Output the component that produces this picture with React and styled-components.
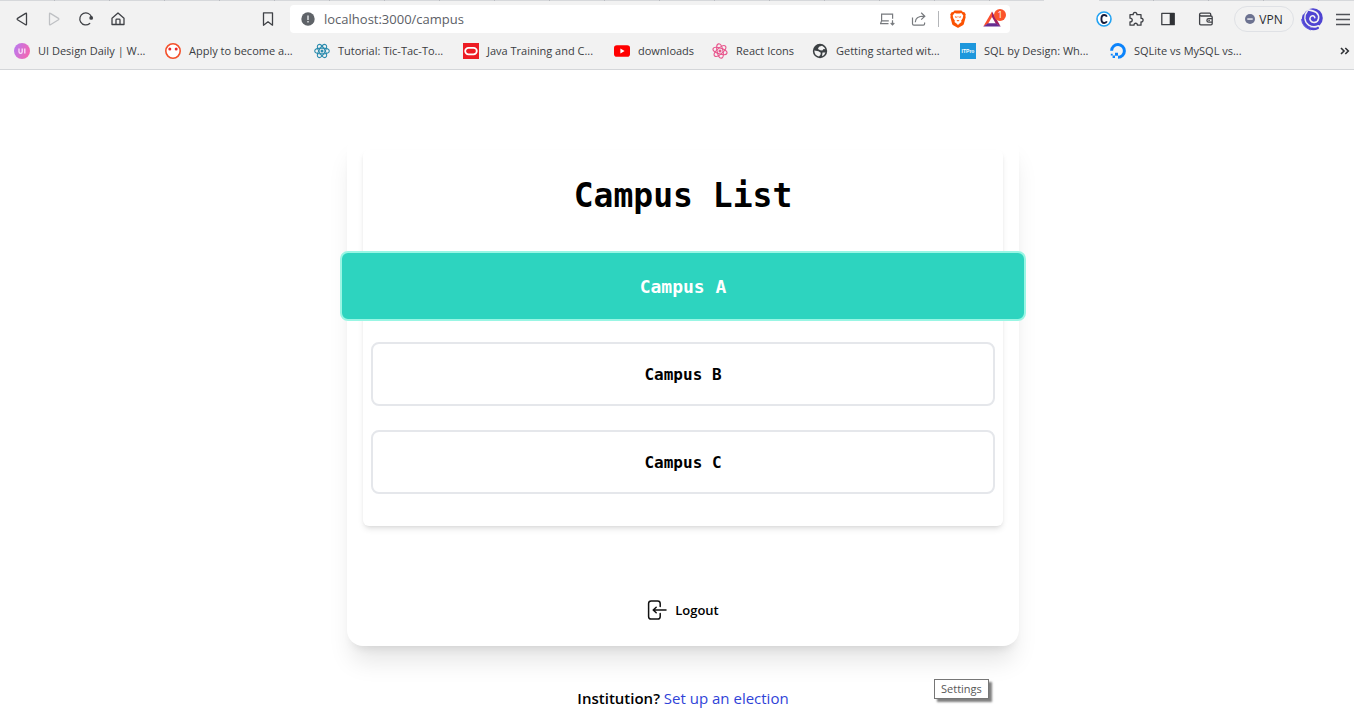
import React from "react";
import styled, { createGlobalStyle } from "styled-components";

const UI_FONT = '"Open Sans", "Noto Sans", sans-serif';
const MONO_FONT = '"DejaVu Sans Mono", "Liberation Mono", monospace';

const GlobalStyle = createGlobalStyle`
  *, *::before, *::after { box-sizing: border-box; }
  body {
    margin: 0;
    background: #fff;
    color: #000;
    font-family: ${UI_FONT};
    overflow: hidden;
  }
  button { font: inherit; color: inherit; background: none; border: 0; padding: 0; cursor: pointer; }
  a { text-decoration: none; }
  svg { display: block; flex: none; }
`;

/* ---------- browser chrome ---------- */

const Chrome = styled.header`
  background: #f2f2f2;
  border-bottom: 1px solid #d4d6d9;
`;

const TabEdge = styled.div`
  display: flex;
  gap: 55px;
  height: 1px;
`;

const EdgeLine = styled.div`
  flex: ${(p) => p.$grow};
  background: repeating-linear-gradient(90deg, #d6d8db 0 54px, #b9bbc0 54px 55px);
`;

const Toolbar = styled.div`
  display: flex;
  align-items: center;
  height: 36px;
  padding: 0 0 0 10px;
`;

const NavGroup = styled.nav`
  display: flex;
  gap: 8px;
  margin-right: 126px;
`;

const IconButton = styled.button`
  display: flex;
  align-items: center;
  justify-content: center;
  width: ${(p) => p.$width || 24}px;
  height: 28px;
  flex: none;
`;

const AddressBar = styled.div`
  display: flex;
  align-items: center;
  flex: 1;
  min-width: 0;
  height: 28px;
  margin: 0 82px 0 10px;
  padding: 0 6px 0 11px;
  border-radius: 4px;
  background: #fff;
`;

const AddressInput = styled.input`
  flex: 1;
  min-width: 0;
  height: 28px;
  margin-left: 9px;
  padding: 0;
  border: 0;
  outline: 0;
  background: transparent;
  color: #5c6066;
  font: 13px/28px ${UI_FONT};
`;

const AddressActions = styled.div`
  display: flex;
  align-items: center;
  gap: 8px;
`;

const Divider = styled.span`
  width: 1px;
  height: 16px;
  margin: 0 -1px;
  background: #b4b6b9;
`;

const RewardsButton = styled(IconButton)`
  position: relative;
  margin-left: 2px;
`;

const Badge = styled.span`
  position: absolute;
  top: 4px;
  right: -2px;
  width: 12px;
  height: 12px;
  border-radius: 50%;
  background: #fb542b;
  color: #fff;
  font-size: 9px;
  line-height: 12px;
  text-align: center;
`;

const Extensions = styled.div`
  display: flex;
  align-items: center;
  gap: 8px;
`;

const VpnButton = styled.button`
  display: flex;
  align-items: center;
  justify-content: center;
  gap: 4px;
  width: 60px;
  height: 26px;
  margin: 0 -2px 0 2px;
  border: 1px solid #dfe1e5;
  border-radius: 13px;
  color: #2b2d31;
  font-size: 12px;
`;

const Bookmarks = styled.nav`
  display: flex;
  align-items: center;
  height: 32px;
  padding: 0 4px 4px 14px;
`;

const Bookmark = styled.a`
  display: flex;
  align-items: center;
  gap: 8px;
  width: ${(p) => p.$width}px;
  flex: none;
  color: #3b3d42;
  font-size: 11px;
  line-height: 20px;
  white-space: nowrap;
`;

const MoreButton = styled.button`
  margin-left: auto;
`;

/* ---------- page ---------- */

const Page = styled.main`
  display: flex;
  flex-direction: column;
  align-items: center;
  padding: 64px 0 0 12px;
`;

const Card = styled.section`
  display: flex;
  flex-direction: column;
  align-items: center;
  width: 100%;
  max-width: 672px;
  padding: 16px 16px 24px;
  border-radius: 16px;
  background: #fff;
  box-shadow: 0 20px 25px -5px rgba(0, 0, 0, 0.1), 0 8px 10px -6px rgba(0, 0, 0, 0.1);
`;

const Panel = styled.div`
  width: 100%;
  padding: 26px 8px 32px;
  border-radius: 6px;
  box-shadow: 0 4px 6px -1px rgba(0, 0, 0, 0.1), 0 2px 4px -2px rgba(0, 0, 0, 0.1);
`;

const Title = styled.h1`
  margin: 0 0 38px;
  font: 700 33px/40px ${MONO_FONT};
  text-align: center;
`;

const CampusList = styled.div`
  display: flex;
  flex-direction: column;
  gap: 24px;
`;

const CampusButton = styled.button`
  height: ${(p) => (p.$active ? 70 : 64)}px;
  margin: ${(p) => (p.$active ? "-3px -31px" : "0")};
  padding-top: 2px;
  border: 2px solid ${(p) => (p.$active ? "#99f6e4" : "#e5e7eb")};
  border-radius: 8px;
  background: ${(p) => (p.$active ? "#2dd4bf" : "#fff")};
  color: ${(p) => (p.$active ? "#fff" : "#000")};
  font: 700 ${(p) => (p.$active ? 18 : 16)}px/28px ${MONO_FONT};
`;

const LogoutButton = styled.button`
  display: flex;
  align-items: center;
  gap: 8px;
  margin-top: 72px;
  font-size: 13px;
  font-weight: 600;
  line-height: 24px;
`;

const Footer = styled.p`
  margin: 40px 0 0;
  font-size: 15px;
  line-height: 24px;
  font-weight: 600;
`;

const FooterLink = styled.a`
  color: #2f43d8;
  font-weight: 400;
`;

const Tooltip = styled.div`
  position: absolute;
  left: 934px;
  top: 679px;
  padding: 0 6px;
  border: 1px solid #767676;
  background: #fff;
  box-shadow: 3px 3px 2px rgba(0, 0, 0, 0.5);
  color: #575757;
  font-size: 11px;
  line-height: 18px;
`;

/* ---------- icons ---------- */

const Svg = ({ w = 16, h = w, children, ...rest }) => (
  <svg width={w} height={h} viewBox={`0 0 ${w} ${h}`} fill="none" aria-hidden="true" {...rest}>
    {children}
  </svg>
);

const stroke = { stroke: "#3f4146", strokeWidth: 1.3, strokeLinejoin: "round", strokeLinecap: "round" };

const Triangle = ({ flip, color }) => (
  <Svg>
    <path
      d={flip ? "M3.5 2.7v10.6q0 1 .9.4l8.1-5q.8-.7 0-1.3l-8.1-5q-.9-.6-.9.3z" : "M12.5 2.7v10.6q0 1-.9.4l-8.1-5q-.8-.7 0-1.3l8.1-5q.9-.6.9.3z"}
      {...stroke}
      stroke={color || "#3f4146"}
    />
  </Svg>
);

const Reload = () => (
  <Svg>
    <path d="M11.7 12.5A6 6 0 1 1 13.6 6.3" {...stroke} />
    <circle cx="13.2" cy="6.9" r="1.9" fill="#3f4146" />
  </Svg>
);

const Home = () => (
  <Svg>
    <path d="M2 7.2 8 2l6 5.2v6.3H2zM6 13.3V9q0-.8.8-.8h2.4q.8 0 .8.8v4.3" {...stroke} />
  </Svg>
);

const BookmarkIcon = () => (
  <Svg>
    <path d="M3.5 1.8h9v12.4L8 10.8l-4.5 3.4z" {...stroke} />
  </Svg>
);

const Info = () => (
  <Svg w={14}>
    <circle cx="7" cy="7" r="6.7" fill="#5f6368" />
    <path d="M6.2 3.4h1.6V8H6.2zM6.2 9h1.6v1.6H6.2z" fill="#d5d7da" />
  </Svg>
);

const Install = () => (
  <Svg>
    <path d="M2.600 9.700V3.200h11v4.600M1 12.600h8.500M1.600 12.500l1-2.600h7.200M13.500 9.300v4.300M11.700 12l1.800 1.800 1.800-1.800" stroke="#777a7e" strokeWidth="1.200" />
  </Svg>
);

const Share = () => (
  <Svg>
    <path d="M1.5 6.5v6.3q0 1.3 1.3 1.3h9.5q1.3 0 1.3-1.3v-1.3M4.3 11.2c.1-4 2.3-6 8.7-6M10.2 1.8l3.6 3.4-3.6 3.4" stroke="#777a7e" strokeWidth="1.2" />
  </Svg>
);

const Brave = () => (
  <Svg w={16} h={18}>
    <path d="M4.6.4h6.8l1.5 1.7 1.6.2 1.3 2.2-.5 1.5.4 1-1.8 6.7q-.3 1-1.1 1.6L8.8 17.6q-.8.5-1.6 0l-4-2.3q-.8-.6-1.1-1.6L.3 7l.4-1L.2 4.5l1.3-2.2 1.6-.2z" fill="#fb5202" />
    <path d="m4.7 3 1.8.5h3l1.8-.5 2 2.5-.6 2.7-1.6 2.6.4 1.2-2 1.4L8 15l-1.5-1.6-2-1.4.4-1.2-1.6-2.6-.6-2.7z" fill="#fff" />
    <path d="m4.800 6.200 2 .5-.4 1.300-1-.4zM11.200 6.200l-2 .5.400 1.300 1-.4zM7.600 6h.8L8 8.600zM6.400 10.500 8 10l1.600.5L8 11.600z" fill="#fb5202" />
  </Svg>
);

const Rewards = () => (
  <Svg w={18} h={16}>
    <path d="M9 .5.3 15.5l4.8-2.8L9 6z" fill="#fb4f2d" />
    <path d="m9 .5 8.7 15-4.8-2.8L9 6z" fill="#9e1f63" />
    <path d="M.3 15.5h17.4l-4.8-3.3H5.1z" fill="#662d91" />
  </Svg>
);

const CircleC = () => (
  <Svg>
    <circle cx="8" cy="8" r="7" fill="#fff" stroke="#22a2f2" strokeWidth="1.6" />
    <path d="M10.9 5.6Q10 4 8.2 4C6.3 4 5.4 5.7 5.4 8s.9 4 2.8 4q1.8 0 2.7-1.6" stroke="#151b3b" strokeWidth="1.9" />
  </Svg>
);

const Puzzle = () => (
  <Svg>
    <path d="M2 3.7h3.2c-.4-3 4-3 3.7 0H13v3.6c2.8-.4 2.8 4 0 3.7v3.2H9.4c.2-2.6-3.6-2.6-3.4 0H2V11c3-.1 3-4 0-3.8z" {...stroke} />
  </Svg>
);

const Sidebar = () => (
  <Svg>
    <path d="M1.8 2.3h12.4v11.4H1.8z" {...stroke} />
    <path d="M9.7 2h4.7v12H9.7z" fill="#303236" />
  </Svg>
);

const Wallet = () => (
  <Svg>
    <path d="M12.7 5V3.2q0-1-1-1H3q-1.4 0-1.4 1.4T3 5h10q1.2 0 1.2 1.2v6.4q0 1.2-1.2 1.2H2.8q-1.2 0-1.2-1.2V3.6M14 7.6h-3.3q-1.8 0-1.8 1.8t1.8 1.8H14" {...stroke} />
    <circle cx="11.1" cy="9.4" r=".8" fill="#3f4146" />
  </Svg>
);

const VpnDot = () => (
  <Svg w={10}>
    <circle cx="5" cy="5" r="5" fill="#6c7290" />
    <path d="M2.3 4.4h5.4v1.3H2.3z" fill="#fff" />
  </Svg>
);

const Swirl = () => (
  <Svg w={24}>
    <circle cx="13" cy="11" r="9.800" fill="#4f44d2" />
    <path d="M3.600 8.500C1.800 13.500 4 19 9.500 21.300c3 1.200 6 .9 8.400-.3" stroke="#4f44d2" strokeWidth="2.200" strokeLinecap="round" />
    <path d="M1.600 12.500C2.300 17.500 5.500 21 10.300 22.800" stroke="#635ae0" strokeWidth="1.200" strokeLinecap="round" />
    <path d="M7.300 4.200C3.500 8.500 4.200 15 8.700 18.100c3 2 6.800 2 9.800.5" stroke="#f2f2f2" strokeWidth="1.300" strokeLinecap="round" />
    <path d="M4.500 2.500c5.500.6 9.300.8 12 3.200 3.600 3.300 2.400 9-1.700 9.700-3.600.6-6.100-3-4.300-5.500 1.300-1.900 4.300-1.300 4.300.9" stroke="#f2f2f2" strokeWidth="1.600" strokeLinecap="round" />
  </Svg>
);

const Menu = () => (
  <Svg w={14}>
    <path d="M0 2.5h14M0 7.5h14M0 12.5h14" stroke="#505257" strokeWidth="1.3" />
  </Svg>
);

const More = () => (
  <Svg w={10}>
    <path d="m1 2 3 3-3 3M5.3 2l3 3-3 3" stroke="#303236" strokeWidth="1.6" />
  </Svg>
);

const UiDaily = () => (
  <Svg>
    <defs>
      <linearGradient id="daily" x1="0" y1="0" x2="1" y2="0.4">
        <stop stopColor="#b57bf5" />
        <stop offset="1" stopColor="#f168b4" />
      </linearGradient>
    </defs>
    <circle cx="8" cy="8" r="8" fill="url(#daily)" />
    <path d="M5 5.5v3.2q0 1.6 1.6 1.6t1.6-1.6V5.5M10.8 5.5v5" stroke="#fbe3fa" strokeWidth="1.3" />
  </Svg>
);

const Eyes = () => (
  <Svg>
    <circle cx="8" cy="8" r="7.2" fill="#fff" stroke="#f4502a" strokeWidth="1.6" />
    <circle cx="4.8" cy="6" r="1.5" fill="#e9282c" />
    <circle cx="11.2" cy="6" r="1.5" fill="#e9282c" />
  </Svg>
);

const Atom = ({ color, turn = 0 }) => (
  <Svg>
    <g stroke={color} strokeWidth="1.1" transform={`rotate(${turn} 8 8)`}>
      <ellipse cx="8" cy="8" rx="7.3" ry="2.9" />
      <ellipse cx="8" cy="8" rx="7.3" ry="2.9" transform="rotate(60 8 8)" />
      <ellipse cx="8" cy="8" rx="7.3" ry="2.9" transform="rotate(120 8 8)" />
    </g>
    <circle cx="8" cy="8" r="1.5" fill={color} />
  </Svg>
);

const Oracle = () => (
  <Svg>
    <path d="M0 0h16v16H0z" fill="#ed1c24" />
    <rect x="2.2" y="4.8" width="11.6" height="6.6" rx="3.3" stroke="#fff" strokeWidth="1.8" />
  </Svg>
);

const Youtube = () => (
  <Svg>
    <rect y="2.3" width="16" height="11.4" rx="2.8" fill="#f00" />
    <path d="m6.4 5.6 4.2 2.4-4.2 2.4z" fill="#fff" />
  </Svg>
);

const Globe = () => (
  <Svg>
    <circle cx="8" cy="8" r="7.200" fill="#3c4043" />
    <path d="M10 2.800 7 3.800 5.900 6l2.400 1.200 2 .3 1.300-1.500 1.800.3Q12.600 3.800 10 2.800z" fill="#f2f2f2" />
    <path d="M2.300 7.500 6.500 8.200l2.300 1.500-.3 2-1.500 1.800Q2.600 12.800 2.300 7.500z" fill="#f2f2f2" />
    <path d="M10.500 9.600h3q-.8 2.700-3.500 3.700z" fill="#f2f2f2" />
  </Svg>
);

const ItPro = () => (
  <Svg>
    <path d="M0 0h16v16H0z" fill="#1d97dc" />
    <text x="8" y="10" fill="#fff" fontFamily="Liberation Sans, sans-serif" fontSize="5" fontWeight="700" textAnchor="middle">
      ITPro
    </text>
  </Svg>
);

const Ocean = () => (
  <Svg>
    <path d="M1.600 7.700A6.400 6.400 0 1 1 8 14.300" stroke="#0b83fb" strokeWidth="3" />
    <path d="M5 9.800h3v3H5zM2.600 12.500h2.400v2.400H2.600zM.800 10.700h1.900v1.900H.800z" fill="#0b83fb" />
  </Svg>
);

const Logout = () => (
  <Svg w={20}>
    <path
      d="M13.200 6.500V3.600q0-2.600-2.600-2.600H4.200Q1.600 1 1.600 3.600v12.800Q1.600 19 4.200 19h6.400q2.600 0 2.600-2.600v-2.900M19 10H6.500M9.200 7.200 6.200 10l3 2.800"
      stroke="#111"
      strokeWidth="1.500"
      strokeLinejoin="round"
      strokeLinecap="round"
    />
  </Svg>
);

/* ---------- data ---------- */

const bookmarks = [
  { label: "UI Design Daily | W...", width: 151, icon: <UiDaily /> },
  { label: "Apply to become a...", width: 149, icon: <Eyes /> },
  { label: "Tutorial: Tic-Tac-To...", width: 149, icon: <Atom color="#2b8cae" /> },
  { label: "Java Training and C...", width: 151, icon: <Oracle /> },
  { label: "downloads", width: 98, icon: <Youtube /> },
  { label: "React Icons", width: 100, icon: <Atom color="#e8558c" turn={18} /> },
  { label: "Getting started wit...", width: 148, icon: <Globe /> },
  { label: "SQL by Design: Wh...", width: 150, icon: <ItPro /> },
  { label: "SQLite vs MySQL vs...", width: 137, icon: <Ocean /> },
];

const campuses = ["Campus A", "Campus B", "Campus C"];

export default function App() {
  const [selected, setSelected] = React.useState("Campus A");

  return (
    <>
      <GlobalStyle />
      <Chrome>
        <TabEdge>
          <EdgeLine $grow={1044} />
          <EdgeLine $grow={255} />
        </TabEdge>
        <Toolbar>
          <NavGroup aria-label="Navigation">
            <IconButton aria-label="Back"><Triangle /></IconButton>
            <IconButton aria-label="Forward"><Triangle flip color="#bfc1c4" /></IconButton>
            <IconButton aria-label="Reload"><Reload /></IconButton>
            <IconButton aria-label="Home"><Home /></IconButton>
          </NavGroup>
          <IconButton aria-label="Bookmark this page"><BookmarkIcon /></IconButton>
          <AddressBar>
            <Info />
            <AddressInput aria-label="Address" defaultValue="localhost:3000/campus" />
            <AddressActions>
              <IconButton aria-label="Install"><Install /></IconButton>
              <IconButton aria-label="Share"><Share /></IconButton>
              <Divider />
              <IconButton aria-label="Shields"><Brave /></IconButton>
              <RewardsButton aria-label="Rewards">
                <Rewards />
                <Badge>1</Badge>
              </RewardsButton>
            </AddressActions>
          </AddressBar>
          <Extensions>
            <IconButton aria-label="Extension"><CircleC /></IconButton>
            <IconButton aria-label="Extensions"><Puzzle /></IconButton>
            <IconButton aria-label="Side panel"><Sidebar /></IconButton>
            <IconButton aria-label="Wallet" $width={36}><Wallet /></IconButton>
            <VpnButton><VpnDot />VPN</VpnButton>
            <IconButton aria-label="Profile"><Swirl /></IconButton>
            <IconButton aria-label="Menu" $width={22}><Menu /></IconButton>
          </Extensions>
        </Toolbar>
        <Bookmarks aria-label="Bookmarks">
          {bookmarks.map((b) => (
            <Bookmark key={b.label} href="#" $width={b.width}>
              {b.icon}
              {b.label}
            </Bookmark>
          ))}
          <MoreButton aria-label="More bookmarks"><More /></MoreButton>
        </Bookmarks>
      </Chrome>

      <Page>
        <Card>
          <Panel>
            <Title>Campus List</Title>
            <CampusList>
              {campuses.map((name) => (
                <CampusButton key={name} $active={name === selected} onClick={() => setSelected(name)}>
                  {name}
                </CampusButton>
              ))}
            </CampusList>
          </Panel>
          <LogoutButton>
            <Logout />
            Logout
          </LogoutButton>
        </Card>
        <Footer>
          Institution? <FooterLink href="#">Set up an election</FooterLink>
        </Footer>
      </Page>
      <Tooltip role="tooltip">Settings</Tooltip>
    </>
  );
}
